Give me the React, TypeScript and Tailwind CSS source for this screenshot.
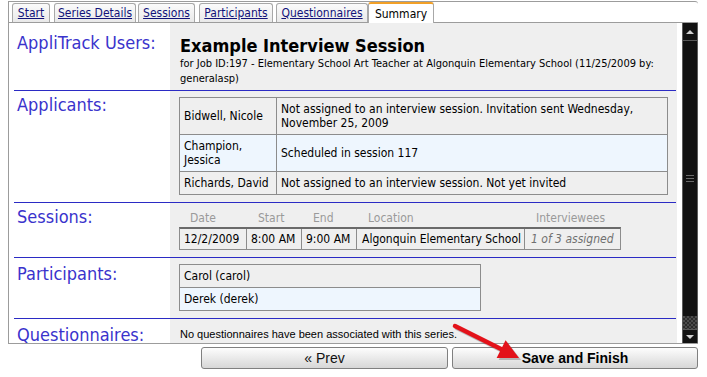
import React from "react";

const tabBase =
  "h-[19px] flex items-center justify-center border border-b-0 border-[#a8a8a8] rounded-t-[3px] bg-linear-to-b from-[#fbfbfb] to-[#e9e9e9] text-[#12127a] underline";

function Sep() {
  return <div className="ml-[5px] mr-[1px] h-px bg-[#2b2bc4]" />;
}

function Label({ children, pt }: { children: React.ReactNode; pt: string }) {
  return (
    <div className={`w-[161px] shrink-0 pl-[8px] text-[18px] leading-[22px] text-[#3a33cc] ${pt}`}>
      {children}
    </div>
  );
}

export default function App() {
  return (
    <div className="relative w-[707px] h-[377px] bg-white overflow-hidden font-['DejaVu_Sans_Condensed','DejaVu_Sans',sans-serif] text-[12px] text-black">
      <div className="ml-[8px] mt-[1px] w-[690px] border-l border-t border-[#9c9c9c] rounded-tr-[3px]">
        {/* tabs */}
        <div className="flex h-[21px] items-end border-b border-[#9c9c9c]">
          <div className={`${tabBase} ml-[3px] w-[38px]`}>Start</div>
          <div className={`${tabBase} ml-[4px] w-[82px]`}>Series Details</div>
          <div className={`${tabBase} ml-[2px] w-[57px]`}>Sessions</div>
          <div className={`${tabBase} ml-[4px] w-[74px]`}>Participants</div>
          <div className={`${tabBase} ml-[3px] w-[92px]`}>Questionnaires</div>
          <div className="h-[21px] mb-[-1px] w-[66px] flex items-center justify-center bg-white border border-b-0 border-[#a8a8a8] border-t-2 border-t-[#f2a027] rounded-t-[3px] text-black">
            Summary
          </div>
        </div>

        {/* panel */}
        <div className="flex h-[321px] border-b border-[#9c9c9c]">
          <div className="w-[668px] h-full overflow-hidden bg-[linear-gradient(to_right,#ffffff_161px,#efefef_161px)]">
            {/* AppliTrack Users */}
            <div className="flex">
              <Label pt="pt-[9px]">AppliTrack Users:</Label>
              <div className="flex-1 pl-[10px] pt-[13px] pb-[4px]">
                <div className="text-[18px] leading-[20px] font-bold">Example Interview Session</div>
                <div className="text-[11px] leading-[15px]">
                  for Job ID:197 - Elementary School Art Teacher at Algonquin Elementary School (11/25/2009 by:
                  <br />
                  generalasp)
                </div>
              </div>
            </div>
            <Sep />

            {/* Applicants */}
            <div className="flex">
              <Label pt="pt-[3px]">Applicants:</Label>
              <div className="flex-1 pl-[9px] pt-[6px] pb-[7px]">
                <table className="w-[489px] border-collapse leading-[14px]">
                  <tbody>
                    <tr className="bg-[#efefef]">
                      <td className="w-[97px] border border-[#8c8c8c] px-[4px] py-[4px] align-middle">Bidwell, Nicole</td>
                      <td className="border border-[#8c8c8c] px-[4px] py-[4px] align-middle">
                        Not assigned to an interview session. Invitation sent Wednesday,
                        <br />
                        November 25, 2009
                      </td>
                    </tr>
                    <tr className="bg-[#eef6fe]">
                      <td className="border border-[#8c8c8c] px-[4px] py-[4px] align-middle">
                        Champion,
                        <br />
                        Jessica
                      </td>
                      <td className="border border-[#8c8c8c] px-[4px] py-[4px] align-middle">Scheduled in session 117</td>
                    </tr>
                    <tr className="bg-[#efefef]">
                      <td className="border border-[#8c8c8c] px-[4px] py-[4px] align-middle">Richards, David</td>
                      <td className="border border-[#8c8c8c] px-[4px] py-[4px] align-middle">
                        Not assigned to an interview session. Not yet invited
                      </td>
                    </tr>
                  </tbody>
                </table>
              </div>
            </div>
            <Sep />

            {/* Sessions */}
            <div className="flex">
              <Label pt="pt-[3px]">Sessions:</Label>
              <div className="flex-1 pl-[9px] pt-[8px] pb-[7px]">
                <div className="flex h-[14px] leading-[14px] text-[#9a9a9a] mb-[2px]">
                  <div className="w-[68px] pl-[11px]">Date</div>
                  <div className="w-[55px] pl-[11px]">Start</div>
                  <div className="w-[55px] pl-[11px]">End</div>
                  <div className="w-[168px] pl-[11px]">Location</div>
                  <div className="w-[96px] pl-[11px]">Interviewees</div>
                </div>
                <div className="inline-flex border border-[#8c8c8c] border-t-2 border-t-[#6a6a6a] leading-[20px] bg-[#efefef]">
                  <div className="w-[67px] pl-[4px] border-r border-[#8c8c8c]">12/2/2009</div>
                  <div className="w-[55px] pl-[4px] border-r border-[#8c8c8c]">8:00 AM</div>
                  <div className="w-[55px] pl-[4px] border-r border-[#8c8c8c]">9:00 AM</div>
                  <div className="w-[168px] pl-[5px] border-r border-[#8c8c8c]">Algonquin Elementary School</div>
                  <div className="w-[95px] pl-[6px] italic text-[#707070]">1 of 3 assigned</div>
                </div>
              </div>
            </div>
            <Sep />

            {/* Participants */}
            <div className="flex">
              <Label pt="pt-[5px]">Participants:</Label>
              <div className="flex-1 pl-[9px] pt-[6px] pb-[7px]">
                <div className="w-[302px] border border-[#8c8c8c] leading-[14px]">
                  <div className="px-[4px] py-[4px] bg-[#efefef] border-b border-[#8c8c8c]">Carol (carol)</div>
                  <div className="px-[4px] py-[4px] bg-[#eef6fe]">Derek (derek)</div>
                </div>
              </div>
            </div>
            <Sep />

            {/* Questionnaires */}
            <div className="flex">
              <Label pt="pt-[5px]">Questionnaires:</Label>
              <div className="flex-1 pl-[10px] pt-[8px] font-['Liberation_Sans',Arial,sans-serif] text-[11px] leading-[14px]">
                No questionnaires have been associated with this series.
              </div>
            </div>
          </div>

          <div className="w-[5px] shrink-0" />

          {/* scrollbar */}
          <div className="w-[16px] shrink-0 h-full bg-[#121212] border-x border-[#5c5c5c] flex flex-col">
            <div className="h-[18px] border-b border-[#5a5a5a] flex items-center justify-center">
              <div className="w-0 h-0 border-x-[4px] border-x-transparent border-b-[4px] border-b-[#d0d0d0]" />
            </div>
            <div className="flex-1 flex flex-col items-center justify-center gap-[2px]">
              <div className="w-[8px] h-px bg-[#6a6a6a]" />
              <div className="w-[8px] h-px bg-[#6a6a6a]" />
              <div className="w-[8px] h-px bg-[#6a6a6a]" />
            </div>
            <div className="h-[13px] bg-[repeating-conic-gradient(#2c2c2c_0%_25%,#4c4c4c_0%_50%)] bg-[length:4px_4px]" />
            <div className="h-[14px] border-t border-[#5a5a5a] flex items-center justify-center">
              <div className="w-0 h-0 border-x-[4px] border-x-transparent border-t-[4px] border-t-[#d0d0d0]" />
            </div>
          </div>
        </div>
      </div>

      {/* buttons */}
      <div className="flex ml-[201px] mt-[3px] gap-[4px] font-['Liberation_Sans',Arial,sans-serif] text-[14px]">
        <div className="w-[247px] h-[22px] flex items-center justify-center border border-[#808080] rounded-[3px] bg-linear-to-b from-[#fdfdfd] to-[#d7d7d7] text-[#111]">
          « Prev
        </div>
        <div className="w-[246px] h-[22px] flex items-center justify-center border border-[#808080] rounded-[3px] bg-linear-to-b from-[#fdfdfd] to-[#d7d7d7] font-bold text-black">
          Save and Finish
        </div>
      </div>

      {/* red arrow */}
      <svg className="absolute left-[440px] top-[315px]" width="95" height="55" viewBox="0 0 95 55">
        <g opacity="0.35" transform="translate(2,2)">
          <line x1="15" y1="11" x2="62" y2="34.5" stroke="#555" strokeWidth="4.5" strokeLinecap="round" />
          <polygon points="79,43 56.6,43 65.6,25.2" fill="#555" />
        </g>
        <line x1="15" y1="11" x2="62" y2="34.5" stroke="#e3121a" strokeWidth="4.5" strokeLinecap="round" />
        <polygon points="79,43 56.6,43 65.6,25.2" fill="#e3121a" />
      </svg>
    </div>
  );
}
